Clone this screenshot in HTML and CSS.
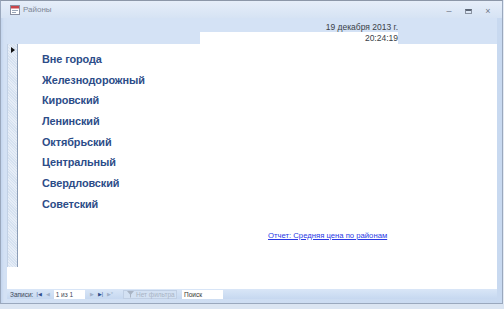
FILE: index.html
```html
<!DOCTYPE html>
<html lang="ru">
<head>
	<meta charset="UTF-8">
	<title>Районы</title>
	<link rel="stylesheet" href="styles.css">
</head>
<body>
	<div class="window">
		<div class="titlebar">
			<svg class="ticon" width="10" height="10" viewBox="0 0 10 10">
				<rect x="0.5" y="0.5" width="9" height="9" fill="#fff" stroke="#8a8fa0"/>
				<rect x="1" y="1" width="8" height="2.5" fill="#c9454b"/>
				<rect x="2" y="5" width="6" height="1" fill="#9aa6b8"/>
				<rect x="2" y="7" width="4" height="1" fill="#9aa6b8"/>
			</svg>
			<span class="ttext">Районы</span>
			<div class="controls">
				<span class="cbtn">&ndash;</span>
				<span class="cbtn max"></span>
				<span class="cbtn">&times;</span>
			</div>
		</div>
		<div class="frame">
			<div class="header">
				<div class="date">19 декабря 2013 г.</div>
				<div class="time">20:24:19</div>
			</div>
			<div class="main">
				<div class="detail">
					<div class="selector"><span class="arrow"></span></div>
					<ul class="list">
						<li>Вне города</li>
						<li>Железнодорожный</li>
						<li>Кировский</li>
						<li>Ленинский</li>
						<li>Октябрьский</li>
						<li>Центральный</li>
						<li>Свердловский</li>
						<li>Советский</li>
					</ul>
					<a class="report" href="#">Отчет: Средняя цена по районам</a>
				</div>
			</div>
			<div class="navbar">
				<span class="lbl">Записи:</span>
				<span class="nav">|&#9664;</span>
				<span class="nav dim">&#9664;</span>
				<span class="box num">1 из 1</span>
				<span class="nav dim">&#9654;</span>
				<span class="nav">&#9654;|</span>
				<span class="nav dim">&#9654;*</span>
				<span class="filter">
					<svg width="7" height="7" viewBox="0 0 7 7"><path d="M0 0 H7 L4 3.5 V7 L3 6 V3.5 Z" fill="#a9b4c4"/></svg>
					Нет фильтра
				</span>
				<span class="box search">Поиск</span>
			</div>
		</div>
	</div>
	<div class="behind"></div>
</body>
</html>
```

FILE: styles.css
```css
*{ margin: 0; padding: 0; box-sizing: border-box;}
body{ background: #e4ebf5; font-family: "Liberation Sans", Arial, sans-serif; width: 504px; height: 309px; overflow: hidden;}
ul{ list-style: none;}

.window{ width: 503px; height: 304px; border: 1px solid #9aa8bd; border-top-color: #8c97a8; background: linear-gradient(to right, #c3d5ee, #d3e1f4 3px, #c8d9f0); display: flex; flex-direction: column;}

.titlebar{ height: 17px; display: flex; align-items: center; padding-left: 9px; background: linear-gradient(#e6eef9, #d6e3f4);}
.ticon{ display: block; margin-right: 3px;}
.ttext{ font-size: 8px; color: #7e8796;}
.controls{ margin-left: auto; display: flex; gap: 10px; padding-right: 9px; margin-top: 3px;}
.cbtn{ width: 10px; font-size: 9px; color: #6f7887; text-align: center; line-height: 8px;}
.cbtn.max{ width: 7px; height: 5px; margin: 2px 1px 0; border: 1px solid #8a93a2; border-top: 2px solid #5c6675;}

.frame{ flex: 1; margin: 0 5px 4px 6px; display: flex; flex-direction: column;}

.header{ height: 26px; background: #d4e2f5; display: grid; grid-template-columns: 193px 198px 1fr; grid-template-rows: 14px 12px; font-size: 8.5px; color: #3a3f48;}
.date{ grid-column: 1 / 3; text-align: right; padding-top: 4px; line-height: 10px;}
.time{ grid-column: 2; grid-row: 2; background: #fff; text-align: right; line-height: 12px;}

.main{ flex: 1; background: #fff;}
.detail{ height: 223px; display: flex; position: relative;}
.selector{ width: 11px; background: repeating-linear-gradient(45deg, #e6edf7 0 1px, #d5e1f0 1px 2px); border-right: 1px solid #8c9db6; border-left: 1px solid #c2d1e5; padding: 2px 0 0 2px;}
.arrow{ display: block; width: 0; height: 0; border-left: 4px solid #111; border-top: 3px solid transparent; border-bottom: 3px solid transparent; margin-left: 1px; margin-top: 1px;}

.list{ padding: 7px 0 0 24px;}
.list li{ height: 20.7px; line-height: 16px; font-size: 10.9px; font-weight: bold; color: #2c4c88; letter-spacing: -0.1px;}

.report{ position: absolute; left: 261px; top: 187px; font-size: 7.7px; color: #2a3ae6; text-decoration: underline;}

.navbar{ height: 10px; background: linear-gradient(#d9e6f7, #c6d8f0); display: flex; align-items: center; font-size: 6.5px; color: #3c4656; padding-left: 3px;}
.lbl{ margin-right: 3px;}
.nav{ font-size: 5px; color: #2f4d8a; margin-right: 4px;}
.nav.dim{ color: #9fb0c8;}
.box{ background: #fff; height: 9px; line-height: 9px; padding-left: 2px;}
.num{ width: 31px; margin-right: 5px;}
.filter{ display: flex; align-items: center; gap: 2px; margin-left: 6px; width: 54px; height: 9px; padding-left: 3px; color: #a9b4c4; background: #d3e1f3; border: 1px solid #c0cfe4;}
.search{ width: 41px; margin-left: 5px; color: #333;}

.behind{ height: 5px; background: #dbe5f2;}
```
